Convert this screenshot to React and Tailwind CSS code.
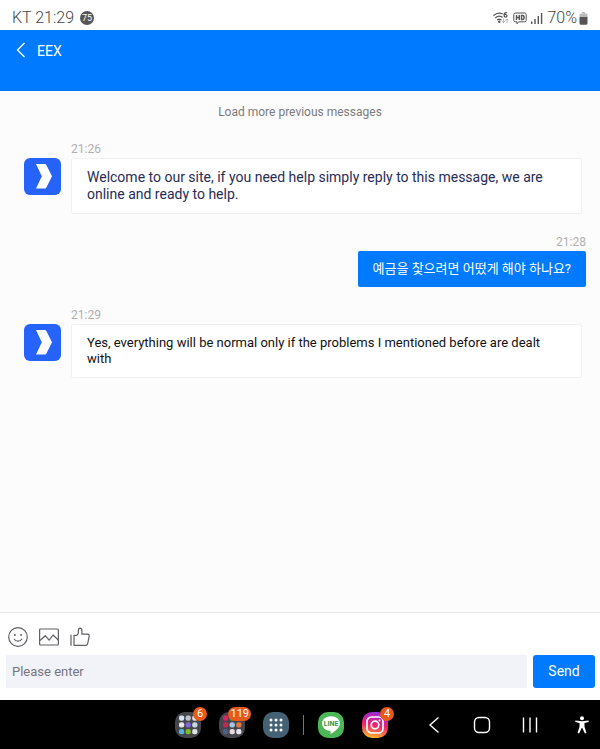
const messages = [
  {
    id: 1,
    from: 'agent',
    time: '21:26',
    text: 'Welcome to our site, if you need help simply reply to this message, we are online and ready to help.',
    textClass: 'text-[14px] leading-[17px] text-[#282c55]',
  },
  { id: 2, from: 'me', time: '21:28', text: '예금을 찿으려면 어떴게 해야 하나요?' },
  {
    id: 3,
    from: 'agent',
    time: '21:29',
    text: 'Yes, everything will be normal only if the problems I mentioned before are dealt with',
    textClass: 'text-[13px] leading-[16px] text-[#111111]',
  },
]

function StatusBar() {
  return (
    <div className="flex h-[30px] items-center justify-between bg-white px-3 pt-1.5 text-[16px] leading-5 font-light text-[#444444]">
      <div className="flex items-center gap-1.5">
        <span>KT 21:29</span>
        <span className="flex h-3.5 w-3.5 items-center justify-center rounded-full bg-[#565656] text-[9px] leading-none font-normal text-white">
          75
        </span>
      </div>
      <div className="flex items-center gap-1">
        <svg width="16" height="14" viewBox="0 0 16 14" fill="none" stroke="#555" strokeWidth="1.2" strokeLinecap="round">
          <path d="M.8 4.4C3 2.2 6.6 1.6 9.4 2.7M2.6 6.7c1.8-1.7 4.6-2 6.5-.6M4.6 8.8c1-.9 2.4-.9 3.4 0" />
          <circle cx="6.3" cy="10.7" r=".6" fill="#555" />
          <path d="M13.6 1.6c-1.7-.2-2.6 1-2.6 2.7 0 2.4 3 2.2 3 .4 0-1.6-2.4-1.5-2.9-.2" />
          <path d="M10.5 8v3.6m-1.2-1.2 1.2 1.3 1.2-1.3M14 11.6V8m-1.2 1.3L14 8l1.2 1.3" stroke="#aaa" strokeWidth=".8" />
        </svg>
        <svg width="14" height="13" viewBox="0 0 14 13" fill="none" stroke="#555" strokeWidth="1">
          <path d="M2.2 1h9.6c.8 0 1.4.6 1.4 1.4v6c0 .8-.6 1.4-1.4 1.4H5.6L4 11.8v-2H2.2C1.4 9.800.8 9.200.8 8.400v-6C.8 1.600 1.400 1 2.200 1Z" />
          <path d="M3.500 3v5M6.300 3v5M3.500 5.500h2.800M8.500 3.500v4h.9c2.300 0 2.300-4 0-4Z" strokeWidth="1.400" />
        </svg>
        <svg width="12" height="12" viewBox="0 0 12 12" fill="#555">
          <path d="M0 9.500h1.400V12H0zM3.300 7h1.400v5H3.300zM6.600 4H8v8H6.600zM9.900 1h1.400v11H9.900z" />
        </svg>
        <div className="flex items-center gap-0.5">
          <span>70%</span>
          <svg width="9" height="13" viewBox="0 0 9 13">
            <path d="M3 0h3v1.500H3z" fill="#bbb" />
            <path d="M.5 5V3c0-.9.7-1.500 1.500-1.500h5c.8 0 1.500.6 1.500 1.500v2Z" fill="#bbb" />
            <path d="M.5 5h8v6.200c0 .8-.7 1.500-1.500 1.500H2c-.8 0-1.500-.7-1.500-1.500Z" fill="#555" />
          </svg>
        </div>
      </div>
    </div>
  )
}

function Header() {
  return (
    <header className="flex h-[61px] items-start gap-2.5 bg-[#007aff] px-4 pt-2.5 text-white">
      <button type="button" aria-label="Back" className="flex h-5 items-center">
        <svg width="11" height="16" viewBox="0 0 11 16" fill="none" stroke="currentColor" strokeWidth="1.3">
          <path d="M8.500 1 1.500 8l7 7" />
        </svg>
      </button>
      <h1 className="text-[14px] leading-[22px]">EEX</h1>
    </header>
  )
}

function Avatar() {
  return (
    <svg width="37" height="37" viewBox="0 0 37 37" className="shrink-0">
      <rect width="37" height="37" rx="6" fill="#2563fb" />
      <path d="M12 6h8.500c1 0 1.500.3 2 1.200L28 18.300l-5.500 11c-.4.900-1 1.200-2 1.200H12l5.800-12.200Z" fill="#fff" />
    </svg>
  )
}

function Message({ message }) {
  if (message.from === 'me') {
    return (
      <li className="flex flex-col items-end pr-3.5">
        <time className="mb-px text-[12px] leading-4 text-[#b0b0b0]">{message.time}</time>
        <p className="rounded-xs bg-[#007aff] px-[15px] py-2.5 text-[13px] leading-4 text-white">
          {message.text}
        </p>
      </li>
    )
  }

  return (
    <li className="flex gap-2.5 pr-[18px] pl-6">
      <div className="pt-[17px]">
        <Avatar />
      </div>
      <div className="min-w-0 flex-1">
        <time className="mb-px block text-[12px] leading-4 text-[#b0b0b0]">{message.time}</time>
        <p className={`rounded-xs border border-[#f1f1f1] bg-white px-[15px] py-2.5 ${message.textClass}`}>
          {message.text}
        </p>
      </div>
    </li>
  )
}

function Composer() {
  return (
    <form className="border-t border-[#ebebeb] bg-white pt-3.5 pr-[5px] pb-3 pl-1.5" onSubmit={(e) => e.preventDefault()}>
      <div className="mb-2 flex gap-[11px] pl-0.5 text-[#5f6064]">
        <button type="button" aria-label="Emoji">
          <svg width="20" height="20" viewBox="0 0 20 20" fill="none" stroke="currentColor" strokeWidth="1.2" strokeLinecap="round">
            <circle cx="10" cy="10" r="9.300" />
            <path d="M6.300 12.300c1.500 2.400 5.900 2.400 7.400 0" />
            <circle cx="6.800" cy="8" r=".4" fill="currentColor" />
            <circle cx="13.200" cy="8" r=".4" fill="currentColor" />
          </svg>
        </button>
        <button type="button" aria-label="Image">
          <svg width="20" height="20" viewBox="0 0 20 20" fill="none" stroke="currentColor" strokeWidth="1.2" strokeLinejoin="round">
            <rect x=".6" y="2" width="18.800" height="16" rx="1" />
            <path d="m1 13.500 5.200-4.800 3.900 4.500 4-5.200 5.100 5" />
          </svg>
        </button>
        <button type="button" aria-label="Like">
          <svg width="20" height="20" viewBox="0 0 20 20" fill="none" stroke="currentColor" strokeWidth="1.2" strokeLinejoin="round" strokeLinecap="round">
            <path d="M1 8v10.300M4 8.300h3L8.400 6V3.300c0-2.900 3.400-2.900 3.500 0v3.900h5.600c1.200 0 1.900.8 1.700 1.900l-1.500 7.600c-.2 1-.8 1.600-1.800 1.600H4Z" />
          </svg>
        </button>
      </div>
      <div className="flex gap-1.5">
        <input
          type="text"
          aria-label="Message"
          placeholder="Please enter"
          className="h-[33px] min-w-0 flex-1 bg-[#f2f3f8] px-1.5 text-[13px] placeholder:text-[#76777b]"
        />
        <button type="submit" className="h-[33px] w-[62px] rounded-[3px] bg-[#007aff] text-[14px] text-white">
          Send
        </button>
      </div>
    </form>
  )
}

function DockIcon({ label, badge, children }) {
  return (
    <button type="button" aria-label={label} className="relative h-[26px] w-[26px]">
      <svg width="26" height="26" viewBox="0 0 26 26">
        {children}
      </svg>
      {badge && (
        <span className="absolute -top-[5px] -right-1.5 flex h-3.5 min-w-3.5 items-center justify-center rounded-full bg-[#e8591c] px-0.5 text-[11px] leading-none text-white">
          {badge}
        </span>
      )}
    </button>
  )
}

function Folder({ colors }) {
  return (
    <>
      <rect width="26" height="26" rx="10" fill="#45464c" />
      {colors.map((color, i) => (
        <rect key={i} x={4 + (i % 3) * 6.6} y={3.5 + Math.floor(i / 3) * 6.8} width="5.200" height="5.200" rx="2" fill={color} />
      ))}
    </>
  )
}

const workColors = ['#d5e1f6', '#bfc4ca', '#e3e3e3', '#e6e6ec', '#8069d6', '#c5d7e3', '#51b6dc', '#83b927', '#dce3e6']
const mediaColors = ['#d92663', '#45a744', '#dd4b39', '#c32750', '#a3c5e2', '#e47746', '#4c6386', '#ead9dc', '#e8e4ef']

function NavigationBar() {
  return (
    <nav className="flex h-[49px] items-center justify-end bg-black text-white">
      <div className="mr-[22px] flex items-center gap-3.5">
        <div className="flex gap-[18px]">
          <DockIcon label="Folder" badge="6">
            <Folder colors={workColors} />
          </DockIcon>
          <DockIcon label="Media folder" badge="119">
            <Folder colors={mediaColors} />
          </DockIcon>
          <DockIcon label="All apps">
            <rect width="26" height="26" rx="10" fill="#456174" />
            {[0, 1, 2, 3, 4, 5, 6, 7, 8].map((i) => (
              <circle key={i} cx={8 + (i % 3) * 5} cy={8 + Math.floor(i / 3) * 5} r="1.500" fill="#fff" />
            ))}
          </DockIcon>
        </div>
        <div className="h-5 w-px bg-[#77736f]" />
        <div className="flex gap-[18px]">
          <DockIcon label="LINE">
            <rect width="26" height="26" rx="10" fill="#4bb757" />
            <path d="M13 4.200c5 0 9 3.200 9 7.300 0 4-5.400 8.200-9 10.300-.8.300-.4-1.500-.6-2.900C7.800 18.700 4 15.600 4 11.500c0-4.100 4-7.300 9-7.300Z" fill="#fff" />
            <text x="13" y="14" textAnchor="middle" fontSize="7" fontWeight="700" fill="#349843">
              LINE
            </text>
          </DockIcon>
          <DockIcon label="Instagram" badge="4">
            <defs>
              <linearGradient id="insta" x1="0.600" y1="0" x2="0.400" y2="1">
                <stop offset="0" stopColor="#9430df" />
                <stop offset="0.500" stopColor="#ed1f73" />
                <stop offset="1" stopColor="#fdb629" />
              </linearGradient>
            </defs>
            <rect width="26" height="26" rx="10" fill="url(#insta)" />
            <g fill="none" stroke="#fff" strokeWidth="1.700">
              <rect x="5" y="5" width="16" height="16" rx="4.500" />
              <circle cx="13" cy="13" r="3.800" />
            </g>
            <circle cx="17.500" cy="8.500" r="1" fill="#fff" />
          </DockIcon>
        </div>
      </div>
      <button type="button" aria-label="Back" className="flex w-12 justify-center">
        <svg width="16" height="18" viewBox="0 0 16 18" fill="none" stroke="currentColor" strokeWidth="1.400">
          <path d="M12.500 1.500 4 9l8.500 7.500" />
        </svg>
      </button>
      <button type="button" aria-label="Home" className="flex w-12 justify-center">
        <svg width="18" height="18" viewBox="0 0 18 18" fill="none" stroke="currentColor" strokeWidth="1.400">
          <rect x="1.500" y="1.500" width="15" height="15" rx="4.500" />
        </svg>
      </button>
      <button type="button" aria-label="Recent apps" className="flex w-12 justify-center">
        <svg width="16" height="16" viewBox="0 0 16 16" fill="none" stroke="currentColor" strokeWidth="1.400">
          <path d="M1.500.5v15M8 .5v15M14.500.5v15" />
        </svg>
      </button>
      <button type="button" aria-label="Accessibility" className="ml-2.5 flex w-9 justify-center">
        <svg width="16" height="18" viewBox="0 0 16 18" fill="currentColor">
          <circle cx="8" cy="2.200" r="2" />
          <path d="M1.500 4.500 8 5.300l6.500-.8.300 1.500-4.300 1v3.800l2 6.200-1.600.6L8.300 12h-.6l-2.600 5.600-1.600-.6 2-6.200V7L1.200 6Z" />
        </svg>
      </button>
    </nav>
  )
}

export default function App() {
  return (
    <div className="flex min-h-screen flex-col bg-[#fcfcfc] font-[Roboto,'Noto_Sans_CJK_KR',sans-serif]">
      <StatusBar />
      <Header />
      <main className="flex flex-1 flex-col gap-5 pt-3">
        <button type="button" className="self-center text-[12px] leading-[18px] text-[#7b7b7b]">
          Load more previous messages
        </button>
        <ul className="flex flex-col gap-5">
          {messages.map((message) => (
            <Message key={message.id} message={message} />
          ))}
        </ul>
      </main>
      <Composer />
      <NavigationBar />
    </div>
  )
}
